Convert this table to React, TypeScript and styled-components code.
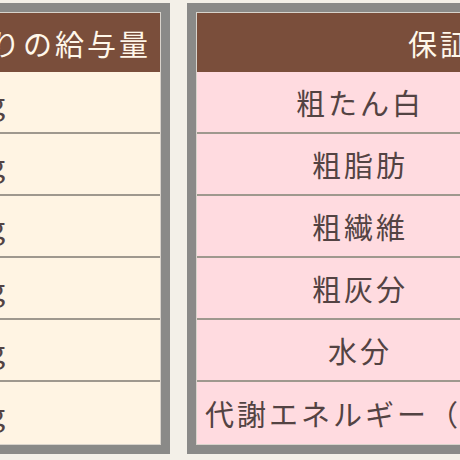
import React from "react";
import styled, { createGlobalStyle } from "styled-components";

const Global = createGlobalStyle`
  html, body { margin: 0; padding: 0; }
  body {
    background: #f3f0e8;
    overflow: hidden;
    width: 460px;
    height: 460px;
    font-family: "Noto Sans CJK JP", "Noto Sans", sans-serif;
  }
`;

const Stage = styled.div`
  display: flex;
  align-items: flex-start;
  gap: 17px;
  padding-top: 3px;
  margin-left: -150px;
  width: 1200px;
`;

const Frame = styled.div<{ $w: number }>`
  width: ${(p) => p.$w}px;
  border: 9px solid #8a8a88;
  padding: 1px;
  background: #d8d3cb;
  flex: none;
`;

const Header = styled.div<{ $align: string; $padR: number }>`
  height: 59px;
  background: #7a4e3b;
  color: #fff7ea;
  display: flex;
  align-items: center;
  justify-content: ${(p) => p.$align};
  padding: 0 ${(p) => p.$padR}px 0 0;
  font-size: 29px;
  letter-spacing: 3px;
  white-space: nowrap;
`;

const Row = styled.div<{ $bg: string; $cols: string; $last?: boolean }>`
  height: ${(p) => (p.$last ? 62 : 60)}px;
  border-bottom: ${(p) => (p.$last ? "none" : "2px solid #9f988e")};
  background: ${(p) => p.$bg};
  display: grid;
  grid-template-columns: ${(p) => p.$cols};
`;

const Cell = styled.div<{ $align: string; $padL: number; $padR: number }>`
  display: flex;
  align-items: center;
  justify-content: ${(p) => p.$align};
  padding: 0 ${(p) => p.$padR}px 0 ${(p) => p.$padL}px;
  font-size: 29px;
  letter-spacing: 3px;
  color: #534343;
  white-space: nowrap;
  min-width: 0;
`;

const CenterText = styled.span`
  display: block;
  text-align: center;
  width: 100%;
  white-space: nowrap;
`;

const amounts = ["30g", "45g", "60g", "75g", "90g", "105g"];
const items = ["粗たん白", "粗脂肪", "粗繊維", "粗灰分", "水分", "代謝エネルギー（kcal/100g）"];

export default function App() {
  return (
    <>
      <Global />
      <Stage>
        <Frame $w={300}>
          <Header $align="flex-end" $padR={9}>1日あたりの給与量</Header>
          {amounts.map((a, i) => (
            <Row key={a} $bg="#fff4e3" $cols="1fr" $last={i === amounts.length - 1}>
              <Cell $align="flex-end" $padL={0} $padR={152}>{a}</Cell>
            </Row>
          ))}
        </Frame>
        <Frame $w={582}>
          <Header $align="center" $padR={0}>保証分析値</Header>
          {items.map((t, i) => (
            <Row key={t} $bg="#ffdbe0" $cols="326px 1fr" $last={i === items.length - 1}>
              <Cell $align="flex-start" $padL={8} $padR={8}>
                <CenterText>{t}</CenterText>
              </Cell>
              <Cell $align="center" $padL={0} $padR={0}></Cell>
            </Row>
          ))}
        </Frame>
      </Stage>
    </>
  );
}
